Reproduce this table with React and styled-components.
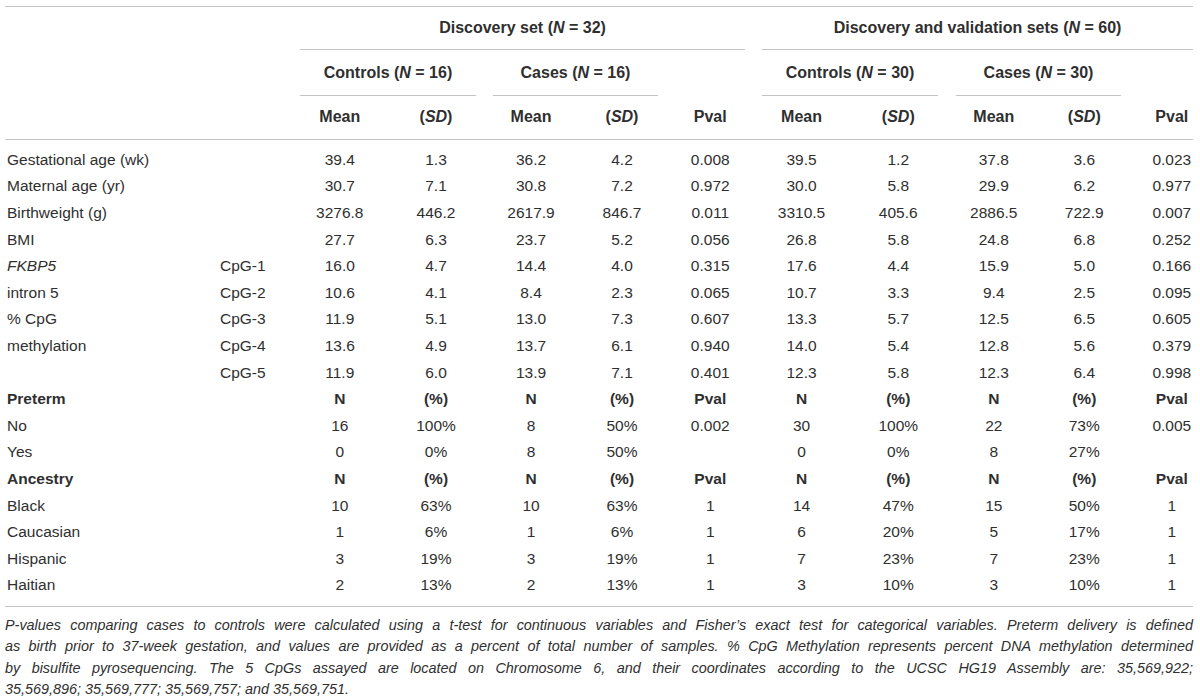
import React from "react";
import styled, { createGlobalStyle } from "styled-components";

const GlobalStyle = createGlobalStyle`
  html, body { margin: 0; padding: 0; background: #ffffff; }
  body {
    font-family: "Liberation Sans", Arial, Helvetica, sans-serif;
    color: #2f2f2f;
  }
`;

const Page = styled.div`
  width: 1200px;
  box-sizing: border-box;
  padding: 6px 7px 0 5px;
`;

const Table = styled.table`
  width: 1188px;
  border-collapse: collapse;
  table-layout: fixed;
  border-top: 1px solid #c4c4c4;
  border-bottom: 1px solid #c4c4c4;
`;

const Col = styled.col`
  width: ${(p) => p.$w}px;
`;

const HeadRow = styled.tr`
  height: ${(p) => p.$h}px;
`;

const Th = styled.th`
  padding: 0;
  font-size: 16px;
  font-weight: bold;
  text-align: center;
  white-space: nowrap;
  border-bottom: ${(p) => (p.$rule ? "1px solid #c4c4c4" : "none")};
  padding-left: ${(p) => (p.$shift ? 22 : 0)}px;
  vertical-align: ${(p) => (p.$mid ? "middle" : "bottom")};
`;

const Group = styled.div`
  height: ${(p) => p.$h}px;
  margin: 0 ${(p) => p.$r}px 0 ${(p) => p.$l}px;
  border-bottom: 1px solid #c4c4c4;
  display: flex;
  align-items: center;
  justify-content: center;
`;

const GroupText = styled.span`
  white-space: pre;
`;

const Row = styled.tr`
  font-weight: ${(p) => (p.$bold ? "bold" : "normal")};
  &:first-child td { padding-top: 7px; }
  &:last-child td { padding-bottom: 7px; }
`;

const Td = styled.td`
  height: 26.6px;
  padding: 0;
  font-size: 15.5px;
  text-align: center;
  vertical-align: middle;
  white-space: nowrap;
  &:last-child { padding-left: 22px; }
`;

const LabelTd = styled(Td)`
  text-align: left;
  padding-left: ${(p) => p.$pad}px;
  font-style: ${(p) => (p.$italic ? "italic" : "normal")};
`;

const Footnote = styled.div`
  padding-top: 8px;
  font-size: 14.4px;
  font-style: italic;
  line-height: 21.5px;
  width: 1188px;
`;

const FootLine = styled.div`
  text-align: justify;
  text-align-last: ${(p) => (p.$last ? "left" : "justify")};
  white-space: nowrap;
`;

const I = styled.i`
  font-style: italic;
`;

const widths = [209, 78, 95.5, 97, 93, 89, 87.5, 95, 98.5, 92.5, 88.5, 64.5];

const continuous = [
  ["Gestational age (wk)", null, ["39.4", "1.3", "36.2", "4.2", "0.008", "39.5", "1.2", "37.8", "3.6", "0.023"]],
  ["Maternal age (yr)", null, ["30.7", "7.1", "30.8", "7.2", "0.972", "30.0", "5.8", "29.9", "6.2", "0.977"]],
  ["Birthweight (g)", null, ["3276.8", "446.2", "2617.9", "846.7", "0.011", "3310.5", "405.6", "2886.5", "722.9", "0.007"]],
  ["BMI", null, ["27.7", "6.3", "23.7", "5.2", "0.056", "26.8", "5.8", "24.8", "6.8", "0.252"]],
  ["FKBP5", "CpG-1", ["16.0", "4.7", "14.4", "4.0", "0.315", "17.6", "4.4", "15.9", "5.0", "0.166"], true],
  ["intron 5", "CpG-2", ["10.6", "4.1", "8.4", "2.3", "0.065", "10.7", "3.3", "9.4", "2.5", "0.095"]],
  ["% CpG", "CpG-3", ["11.9", "5.1", "13.0", "7.3", "0.607", "13.3", "5.7", "12.5", "6.5", "0.605"]],
  ["methylation", "CpG-4", ["13.6", "4.9", "13.7", "6.1", "0.940", "14.0", "5.4", "12.8", "5.6", "0.379"]],
  ["", "CpG-5", ["11.9", "6.0", "13.9", "7.1", "0.401", "12.3", "5.8", "12.3", "6.4", "0.998"]],
];

const catHead = ["N", "(%)", "N", "(%)", "Pval", "N", "(%)", "N", "(%)", "Pval"];

const preterm = [
  ["No", ["16", "100%", "8", "50%", "0.002", "30", "100%", "22", "73%", "0.005"]],
  ["Yes", ["0", "0%", "8", "50%", "", "0", "0%", "8", "27%", ""]],
];

const ancestry = [
  ["Black", ["10", "63%", "10", "63%", "1", "14", "47%", "15", "50%", "1"]],
  ["Caucasian", ["1", "6%", "1", "6%", "1", "6", "20%", "5", "17%", "1"]],
  ["Hispanic", ["3", "19%", "3", "19%", "1", "7", "23%", "7", "23%", "1"]],
  ["Haitian", ["2", "13%", "2", "13%", "1", "3", "10%", "3", "10%", "1"]],
];

const Cells = ({ values }) => values.map((v, i) => <Td key={i}>{v}</Td>);

const SimpleRow = ({ label, values, bold }) => (
  <Row $bold={bold}>
    <LabelTd colSpan={2} $pad={2}>{label}</LabelTd>
    <Cells values={values} />
  </Row>
);

const Sub = () => (
  <>
    (<I>SD</I>)
  </>
);

const GroupHead = ({ colSpan, h, l, r, name, n }) => (
  <Th colSpan={colSpan}>
    <Group $h={h} $l={l} $r={r}>
      <GroupText>
        {name} (<I>N</I>
        {" = "}
        {n})
      </GroupText>
    </Group>
  </Th>
);

const footLines = [
  "P-values comparing cases to controls were calculated using a t-test for continuous variables and Fisher’s exact test for categorical variables. Preterm delivery is defined",
  "as birth prior to 37-week gestation, and values are provided as a percent of total number of samples. % CpG Methylation represents percent DNA methylation determined",
  "by bisulfite pyrosequencing. The 5 CpGs assayed are located on Chromosome 6, and their coordinates according to the UCSC HG19 Assembly are: 35,569,922;",
  "35,569,896; 35,569,777; 35,569,757; and 35,569,751.",
];

export default function App() {
  return (
    <>
      <GlobalStyle />
      <Page>
        <Table>
          <colgroup>
            {widths.map((w, i) => (
              <Col key={i} $w={w} />
            ))}
          </colgroup>
          <thead>
            <HeadRow $h={43}>
              <Th rowSpan={3} colSpan={2} $rule />
              <GroupHead colSpan={5} h={42} l={8} r={9} name="Discovery set" n={32} />
              <GroupHead colSpan={5} h={42} l={8} r={0} name="Discovery and validation sets" n={60} />
            </HeadRow>
            <HeadRow $h={46}>
              <GroupHead colSpan={2} h={45} l={8} r={8.5} name="Controls" n={16} />
              <GroupHead colSpan={2} h={45} l={8.5} r={8.5} name="Cases" n={16} />
              <Th />
              <GroupHead colSpan={2} h={45} l={8} r={9.5} name="Controls" n={30} />
              <GroupHead colSpan={2} h={45} l={8.5} r={7.5} name="Cases" n={30} />
              <Th />
            </HeadRow>
            <HeadRow $h={43}>
              <Th $rule $mid>Mean</Th>
              <Th $rule $mid><Sub /></Th>
              <Th $rule $mid>Mean</Th>
              <Th $rule $mid><Sub /></Th>
              <Th $rule $mid>Pval</Th>
              <Th $rule $mid>Mean</Th>
              <Th $rule $mid><Sub /></Th>
              <Th $rule $mid>Mean</Th>
              <Th $rule $mid><Sub /></Th>
              <Th $rule $mid $shift>Pval</Th>
            </HeadRow>
          </thead>
          <tbody>
            {continuous.map(([label, cpg, values, italic], i) =>
              cpg ? (
                <Row key={"c" + i}>
                  <LabelTd $pad={2} $italic={italic}>{label}</LabelTd>
                  <LabelTd $pad={6}>{cpg}</LabelTd>
                  <Cells values={values} />
                </Row>
              ) : (
                <SimpleRow key={"c" + i} label={label} values={values} />
              )
            )}
            <SimpleRow label="Preterm" values={catHead} bold />
            {preterm.map(([label, values]) => (
              <SimpleRow key={label} label={label} values={values} />
            ))}
            <SimpleRow label="Ancestry" values={catHead} bold />
            {ancestry.map(([label, values]) => (
              <SimpleRow key={label} label={label} values={values} />
            ))}
          </tbody>
        </Table>
        <Footnote>
          {footLines.map((line, i) => (
            <FootLine key={i} $last={i === footLines.length - 1}>
              {line}
            </FootLine>
          ))}
        </Footnote>
      </Page>
    </>
  );
}
